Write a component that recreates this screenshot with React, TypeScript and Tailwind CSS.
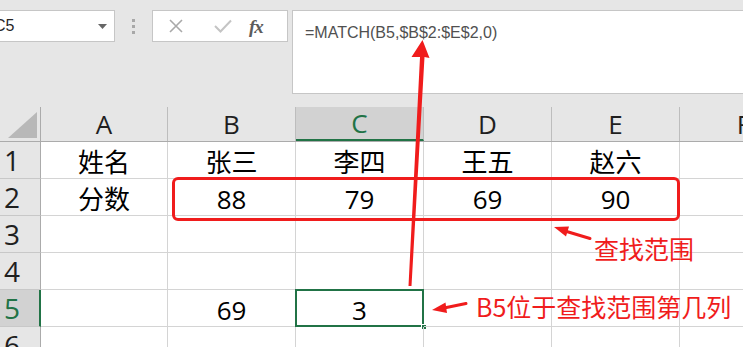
import React from "react";

const cols = [
  { key: "A", w: "w-[127px]" },
  { key: "B", w: "w-[128px]" },
  { key: "C", w: "w-[128px]" },
  { key: "D", w: "w-[128px]" },
  { key: "E", w: "w-[128px]" },
  { key: "F", w: "w-[128px]" },
];

const data: Record<number, string[]> = {
  1: ["姓名", "张三", "李四", "王五", "赵六", ""],
  2: ["分数", "88", "79", "69", "90", ""],
  3: ["", "", "", "", "", ""],
  4: ["", "", "", "", "", ""],
  5: ["", "69", "3", "", "", ""],
  6: ["", "", "", "", "", ""],
};

const cellFont = { fontFamily: '"Open Sans", "Noto Sans CJK SC", sans-serif' };
const cjk = { fontFamily: '"Noto Sans CJK SC", sans-serif' };

export default function App() {
  return (
    <div className="relative w-[743px] h-[347px] overflow-hidden bg-white">
      {/* Toolbar / formula bar */}
      <div className="flex h-[107px] bg-[#e6e6e6] pt-[10px] items-start">
        <div className="flex items-center w-[115px] h-[32px] bg-white border border-l-0 border-[#c6c6c6] overflow-hidden">
          <span
            className="ml-[-6px] text-[16px] text-[#262626] flex-1 leading-none"
            style={{ fontFamily: '"Liberation Sans", sans-serif' }}
          >
            C5
          </span>
          <svg width="9" height="5" viewBox="0 0 9 5" className="mr-[7px]">
            <path d="M0 0 L9 0 L4.5 5 Z" fill="#666" />
          </svg>
        </div>
        <div className="w-[37px] h-[32px] flex flex-col items-center justify-center gap-[3px]">
          <div className="w-[3px] h-[3px] bg-[#a8a8a8]" />
          <div className="w-[3px] h-[3px] bg-[#a8a8a8]" />
          <div className="w-[3px] h-[3px] bg-[#a8a8a8]" />
        </div>
        <div className="w-[136px] h-[32px] bg-white border border-[#c6c6c6] flex items-center">
          <svg width="14" height="14" viewBox="0 0 14 14" className="ml-[16px]">
            <path d="M1 1 L13 13 M13 1 L1 13" stroke="#a9a9a9" strokeWidth="1.6" />
          </svg>
          <svg width="18" height="14" viewBox="0 0 18 14" className="ml-[31px]">
            <path d="M1 7 L6.5 12.5 L17 1.5" stroke="#c4c4c4" strokeWidth="2" fill="none" />
          </svg>
          <span
            className="ml-[17px] text-[19px] italic font-bold text-[#5c5c5c] leading-none tracking-[-1px]"
            style={{ fontFamily: '"Liberation Serif", serif' }}
          >
            fx
          </span>
        </div>
        <div className="ml-[4px] flex-1 h-[84px] bg-white border-t border-b border-l border-[#c6c6c6] pl-[12px] pt-[9px]">
          <span
            className="text-[16px] text-[#505050] leading-none"
            style={{ fontFamily: '"Liberation Sans", sans-serif' }}
          >
            =MATCH(B5,$B$2:$E$2,0)
          </span>
        </div>
      </div>

      {/* Column headers */}
      <div className="flex h-[35px] bg-[#e6e6e6] border-b border-[#ababab]">
        <div className="w-[41px] shrink-0 border-r border-[#ababab] relative">
          <svg width="41" height="35" className="absolute left-0 top-0">
            <path d="M8 31 L37 31 L37 5 Z" fill="#b8b8b8" />
          </svg>
        </div>
        {cols.map((c) => {
          const sel = c.key === "C";
          return (
            <div
              key={c.key}
              className={`${c.w} shrink-0 flex items-center justify-center border-r border-[#bdbdbd] text-[26px] leading-none ${
                sel ? "bg-[#d2d2d2] text-[#217346] border-b-2 border-b-[#217346]" : "text-[#1f1f1f]"
              }`}
              style={cellFont}
            >
              {c.key}
            </div>
          );
        })}
      </div>

      {/* Rows */}
      {[1, 2, 3, 4, 5, 6].map((r) => {
        const selRow = r === 5;
        return (
          <div key={r} className="flex h-[37px]">
            <div
              className={`w-[41px] shrink-0 flex items-center pl-[4px] text-[28px] leading-none border-b border-[#c8c8c8] ${
                selRow
                  ? "bg-[#d2d2d2] text-[#217346] border-r-2 border-r-[#217346]"
                  : "bg-[#e6e6e6] text-[#1f1f1f] border-r border-r-[#ababab]"
              }`}
              style={cellFont}
            >
              {r}
            </div>
            {cols.map((c, i) => {
              const sel = r === 5 && c.key === "C";
              return (
                <div
                  key={c.key}
                  className={`${c.w} shrink-0 relative flex items-center justify-center pt-[3px] border-r border-b border-[#d4d4d4] text-[26px] leading-none text-black`}
                  style={cellFont}
                >
                  {data[r][i]}
                  {sel && (
                    <>
                      <div className="absolute left-[-1px] top-[-1px] right-[-1px] bottom-[-1px] border-2 border-[#217346]" />
                      <div className="absolute right-[-4px] bottom-[-4px] w-[6px] h-[6px] bg-[#217346] border border-white" />
                    </>
                  )}
                </div>
              );
            })}
          </div>
        );
      })}

      {/* Annotations overlay */}
      <div className="absolute left-[172px] top-[177px] w-[508px] h-[44px] border-[3px] border-[#f01c1c] rounded-[6px] pointer-events-none" />
      <svg className="absolute left-0 top-0 pointer-events-none" width="743" height="347" viewBox="0 0 743 347">
        <polygon
          points="408.5,286 411.5,286 424.5,57 429.5,58 422.5,40 411.5,57 420,57"
          fill="#f01c1c"
        />
        <line x1="565" y1="231" x2="590" y2="238.5" stroke="#f01c1c" strokeWidth="3" strokeLinecap="round" />
        <polygon points="554,227 569,226.5 566,236.5" fill="#f01c1c" />
        <line x1="444" y1="308" x2="466" y2="303.5" stroke="#f01c1c" strokeWidth="3" strokeLinecap="round" />
        <polygon points="432,310 445.5,302.5 447,313" fill="#f01c1c" />
      </svg>
      <span
        className="absolute left-[594px] top-[236px] text-[25px] leading-none text-[#f01c1c] whitespace-nowrap"
        style={cjk}
      >
        查找范围
      </span>
      <span
        className="absolute left-[476px] top-[294px] text-[25px] leading-none text-[#f01c1c] whitespace-nowrap"
        style={cjk}
      >
        B5位于查找范围第几列
      </span>
    </div>
  );
}
